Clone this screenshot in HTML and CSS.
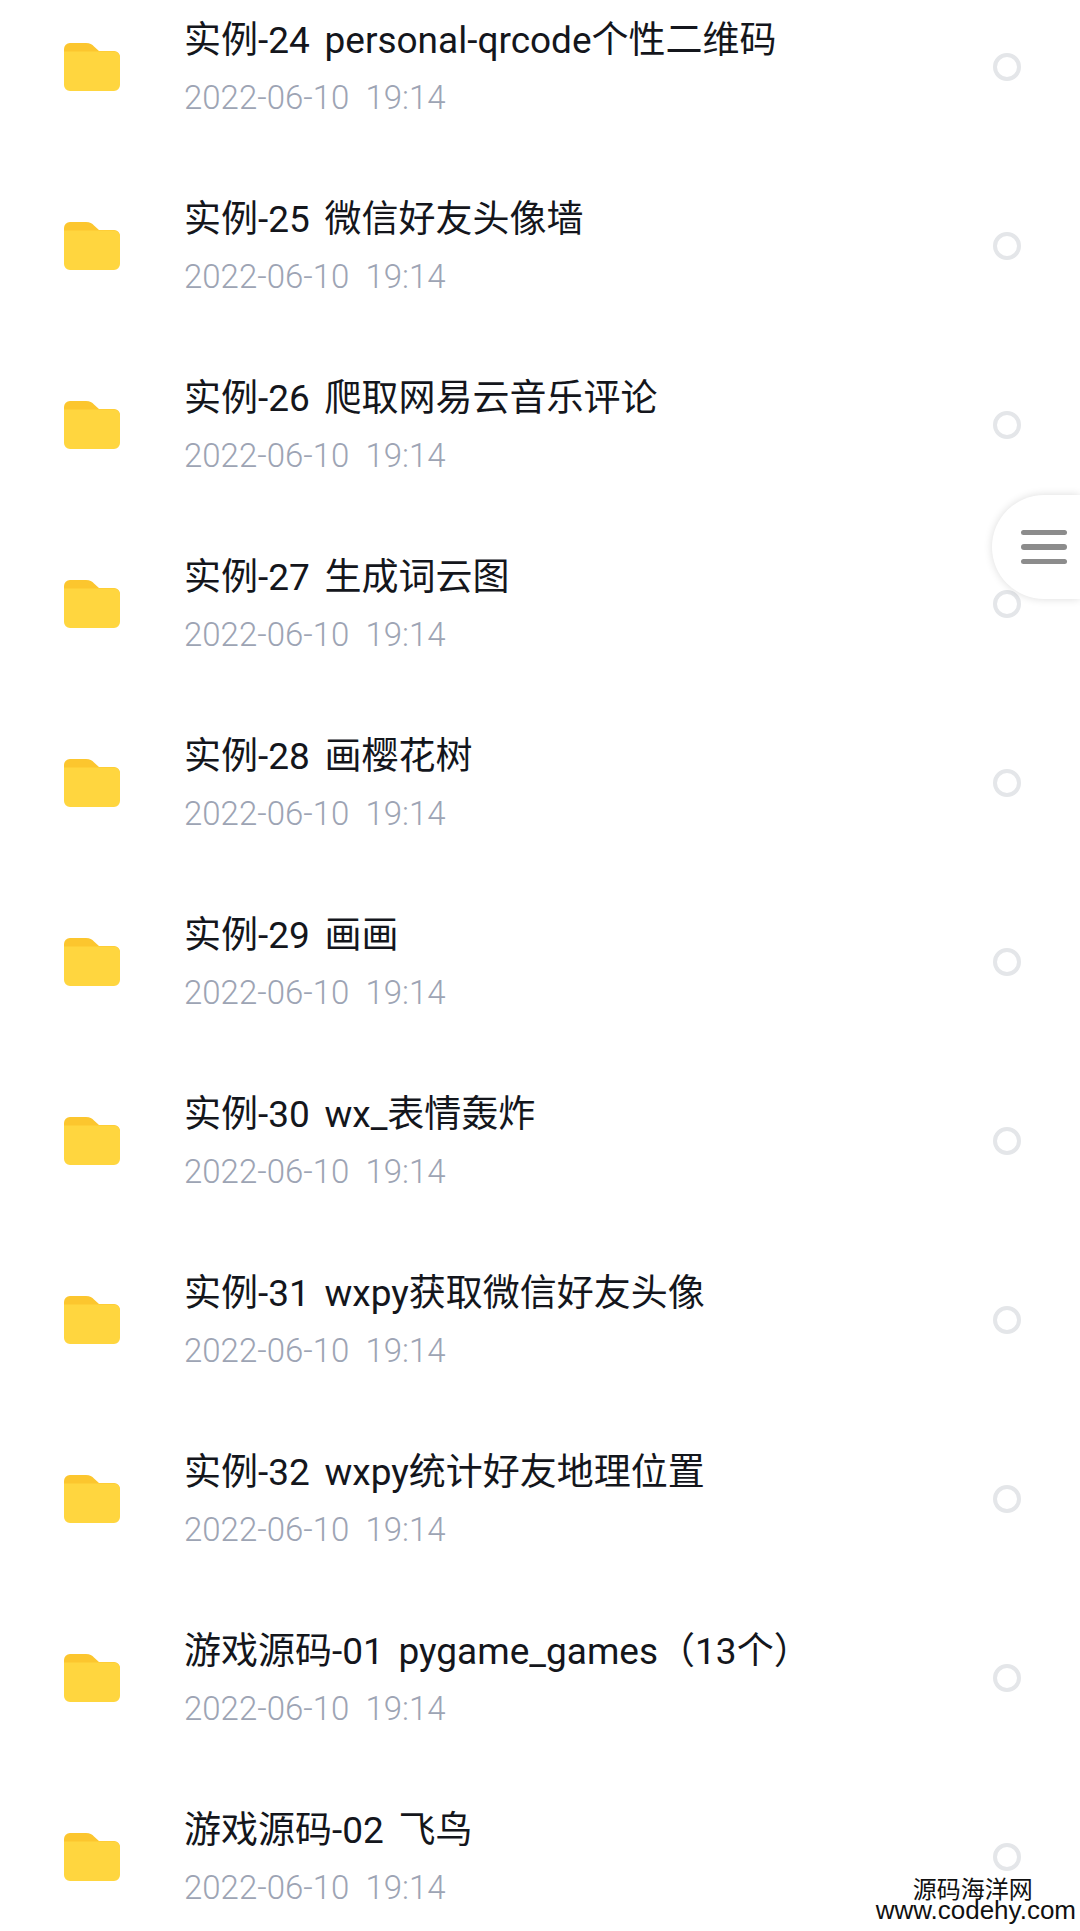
FILE: index.html
```html
<!DOCTYPE html>
<html lang="zh-CN">
<head>
    <meta charset="UTF-8">
    <meta name="viewport" content="width=device-width, initial-scale=1.0">
    <title>文件列表</title>
    <link rel="stylesheet" href="styles.css">
</head>
<body>

<svg class="defs" width="0" height="0" aria-hidden="true">
    <symbol id="folder" viewBox="0 0 56 48">
        <path fill="#fcc62e" d="M0 6a6 6 0 0 1 6-6h16c4 0 6 1.500 8 3.500l5 4.500H50a6 6 0 0 1 6 6v8H0z"/>
        <path fill="#ffd63f" d="M0 8.500h44.500H50a6 6 0 0 1 6 6V42a6 6 0 0 1-6 6H6a6 6 0 0 1-6-6z"/>
    </symbol>
</svg>

<div class="file-list">
    <div class="file-row">
        <svg class="folder-icon"><use href="#folder"/></svg>
        <div class="file-info">
            <div class="file-name">实例-24 personal-qrcode个性二维码</div>
            <div class="file-date">2022-06-10&nbsp; 19:14</div>
        </div>
        <span class="radio"></span>
    </div>
    <div class="file-row">
        <svg class="folder-icon"><use href="#folder"/></svg>
        <div class="file-info">
            <div class="file-name">实例-25 微信好友头像墙</div>
            <div class="file-date">2022-06-10&nbsp; 19:14</div>
        </div>
        <span class="radio"></span>
    </div>
    <div class="file-row">
        <svg class="folder-icon"><use href="#folder"/></svg>
        <div class="file-info">
            <div class="file-name">实例-26 爬取网易云音乐评论</div>
            <div class="file-date">2022-06-10&nbsp; 19:14</div>
        </div>
        <span class="radio"></span>
    </div>
    <div class="file-row">
        <svg class="folder-icon"><use href="#folder"/></svg>
        <div class="file-info">
            <div class="file-name">实例-27 生成词云图</div>
            <div class="file-date">2022-06-10&nbsp; 19:14</div>
        </div>
        <span class="radio"></span>
    </div>
    <div class="file-row">
        <svg class="folder-icon"><use href="#folder"/></svg>
        <div class="file-info">
            <div class="file-name">实例-28 画樱花树</div>
            <div class="file-date">2022-06-10&nbsp; 19:14</div>
        </div>
        <span class="radio"></span>
    </div>
    <div class="file-row">
        <svg class="folder-icon"><use href="#folder"/></svg>
        <div class="file-info">
            <div class="file-name">实例-29 画画</div>
            <div class="file-date">2022-06-10&nbsp; 19:14</div>
        </div>
        <span class="radio"></span>
    </div>
    <div class="file-row">
        <svg class="folder-icon"><use href="#folder"/></svg>
        <div class="file-info">
            <div class="file-name">实例-30 wx_表情轰炸</div>
            <div class="file-date">2022-06-10&nbsp; 19:14</div>
        </div>
        <span class="radio"></span>
    </div>
    <div class="file-row">
        <svg class="folder-icon"><use href="#folder"/></svg>
        <div class="file-info">
            <div class="file-name">实例-31 wxpy获取微信好友头像</div>
            <div class="file-date">2022-06-10&nbsp; 19:14</div>
        </div>
        <span class="radio"></span>
    </div>
    <div class="file-row">
        <svg class="folder-icon"><use href="#folder"/></svg>
        <div class="file-info">
            <div class="file-name">实例-32 wxpy统计好友地理位置</div>
            <div class="file-date">2022-06-10&nbsp; 19:14</div>
        </div>
        <span class="radio"></span>
    </div>
    <div class="file-row">
        <svg class="folder-icon"><use href="#folder"/></svg>
        <div class="file-info">
            <div class="file-name">游戏源码-01 pygame_games（13个）</div>
            <div class="file-date">2022-06-10&nbsp; 19:14</div>
        </div>
        <span class="radio"></span>
    </div>
    <div class="file-row">
        <svg class="folder-icon"><use href="#folder"/></svg>
        <div class="file-info">
            <div class="file-name">游戏源码-02 飞鸟</div>
            <div class="file-date">2022-06-10&nbsp; 19:14</div>
        </div>
        <span class="radio"></span>
    </div>
</div>

<!-- floating menu tab on the right edge -->
<div class="side-tab">
    <span></span>
    <span></span>
    <span></span>
</div>

<div class="watermark">
    <div class="watermark-name">源码海洋网</div>
    <div class="watermark-url">www.codehy.com</div>
</div>

</body>
</html>
```

FILE: styles.css
```css
html, body {
    height: 100%;
}
body {
    font-family: Roboto, 'Noto Sans CJK SC', sans-serif;
    margin: 0;
    background-color: white;
    position: relative;
    overflow: hidden;
}
.defs {
    position: absolute;
}
.file-list {
    margin-top: -23px;
}
.file-row {
    display: flex;
    align-items: center;
    height: 179px;
    padding: 0 59px 0 64px;
}
.folder-icon {
    width: 56px;
    height: 48px;
    margin-right: 64px;
    flex-shrink: 0;
}
.file-info {
    flex: 1;
}
.file-name {
    font-size: 37px;
    word-spacing: 5.500px;
    line-height: 46px;
    padding-top: 2px;
    color: #14161c;
}
.file-date {
    font-size: 33px;
    font-weight: 300;
    line-height: 40px;
    margin-top: 14px;
    color: #9da4b4;
}
.radio {
    width: 28px;
    height: 28px;
    box-sizing: border-box;
    border: 4px solid #e4e6e9;
    border-radius: 50%;
}
.side-tab {
    position: absolute;
    top: 495px;
    right: 0;
    width: 88px;
    height: 104px;
    box-sizing: border-box;
    padding-left: 29px;
    display: flex;
    flex-direction: column;
    justify-content: center;
    gap: 9px;
    background-color: white;
    border-radius: 52px 0 0 52px;
    box-shadow: 0 0 8px rgba(0, 0, 0, 0.14);
}
.side-tab span {
    width: 46px;
    height: 5.500px;
    border-radius: 3px;
    background-color: #8c8c8c;
}
.watermark {
    position: absolute;
    right: 4px;
    bottom: 10px;
    text-align: center;
    font-family: 'Liberation Sans', 'Noto Sans CJK SC', sans-serif;
    color: #111;
}
.watermark-name {
    font-size: 24px;
    line-height: 21px;
    padding-right: 6px;
}
.watermark-url {
    font-size: 26px;
    line-height: 21px;
}
```
